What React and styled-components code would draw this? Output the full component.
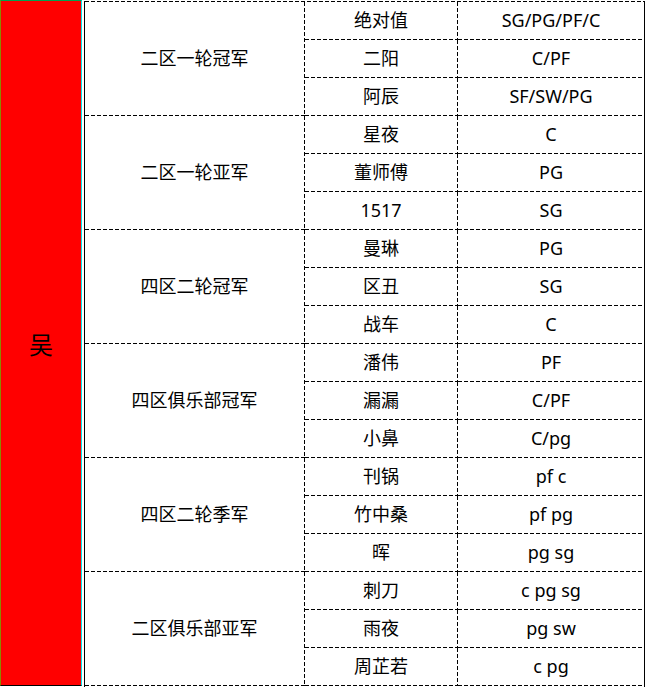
import React from "react";
import styled, { createGlobalStyle } from "styled-components";

const Global = createGlobalStyle`
  html, body { margin: 0; padding: 0; background: #fff; }
  body { font-family: "Noto Sans", "Noto Sans CJK SC", sans-serif; color: #000; }
`;

const groups = [
  { title: "二区一轮冠军", rows: [["绝对值", "SG/PG/PF/C"], ["二阳", "C/PF"], ["阿辰", "SF/SW/PG"]] },
  { title: "二区一轮亚军", rows: [["星夜", "C"], ["董师傅", "PG"], ["1517", "SG"]] },
  { title: "四区二轮冠军", rows: [["曼琳", "PG"], ["区丑", "SG"], ["战车", "C"]] },
  { title: "四区俱乐部冠军", rows: [["潘伟", "PF"], ["漏漏", "C/PF"], ["小鼻", "C/pg"]] },
  { title: "四区二轮季军", rows: [["刊锅", "pf c"], ["竹中桑", "pf pg"], ["晖", "pg sg"]] },
  { title: "二区俱乐部亚军", rows: [["刺刀", "c pg sg"], ["雨夜", "pg sw"], ["周芷若", "c pg"]] },
];

const dashH = `repeating-linear-gradient(to right, #000 0 4px, transparent 4px 6px)`;
const dashV = `repeating-linear-gradient(to bottom, #000 0 4px, transparent 4px 6px)`;

const Sheet = styled.div`
  display: flex;
  width: 648px;
  height: 687px;
`;

const TeamCell = styled.div`
  width: 80px;
  height: 684px;
  background: #ff0000;
  border-top: 1px solid #00a050;
  border-left: 1px solid #8a8a00;
  border-right: 1px solid #00e8f0;
  border-bottom: 1px solid #000;
  display: flex;
  align-items: center;
  justify-content: center;
  font-family: "Noto Sans CJK SC", serif;
  font-size: 24px;
  font-weight: 400;
  margin-right: 2px;
`;

const Table = styled.div`
  margin-top: 1px;
  width: 561px;
  height: 686px;
  border-left: 1px solid #000;
  border-right: 1px solid #000;
  background: ${dashH} top / 100% 1px no-repeat;
  padding-top: 1px;
  box-sizing: border-box;
`;

const Group = styled.div`
  display: grid;
  grid-template-columns: 220px 153px 186px;
  grid-template-rows: repeat(3, 38px);
`;

const Cell = styled.div`
  display: flex;
  align-items: center;
  justify-content: center;
  padding-bottom: 3px;
  padding-right: ${(p) => (p.$last ? 0 : 1)}px;
  box-sizing: border-box;
  font-size: 18px;
  line-height: 1;
  background: ${(p) =>
    p.$last
      ? `${dashH} bottom / 100% 1px no-repeat`
      : `${dashH} bottom / 100% 1px no-repeat, ${dashV} right / 1px 100% no-repeat`};
`;

const TitleCell = styled(Cell)`
  grid-row: span 3;
`;

export default function App() {
  return (
    <>
      <Global />
      <Sheet>
        <TeamCell>吴</TeamCell>
        <Table>
          {groups.map((g) => (
            <Group key={g.title}>
              <TitleCell>{g.title}</TitleCell>
              {g.rows.map(([name, pos], i) => (
                <React.Fragment key={name}>
                  <Cell style={{ gridColumn: 2, gridRow: i + 1 }}>{name}</Cell>
                  <Cell $last style={{ gridColumn: 3, gridRow: i + 1 }}>{pos}</Cell>
                </React.Fragment>
              ))}
            </Group>
          ))}
        </Table>
      </Sheet>
    </>
  );
}
